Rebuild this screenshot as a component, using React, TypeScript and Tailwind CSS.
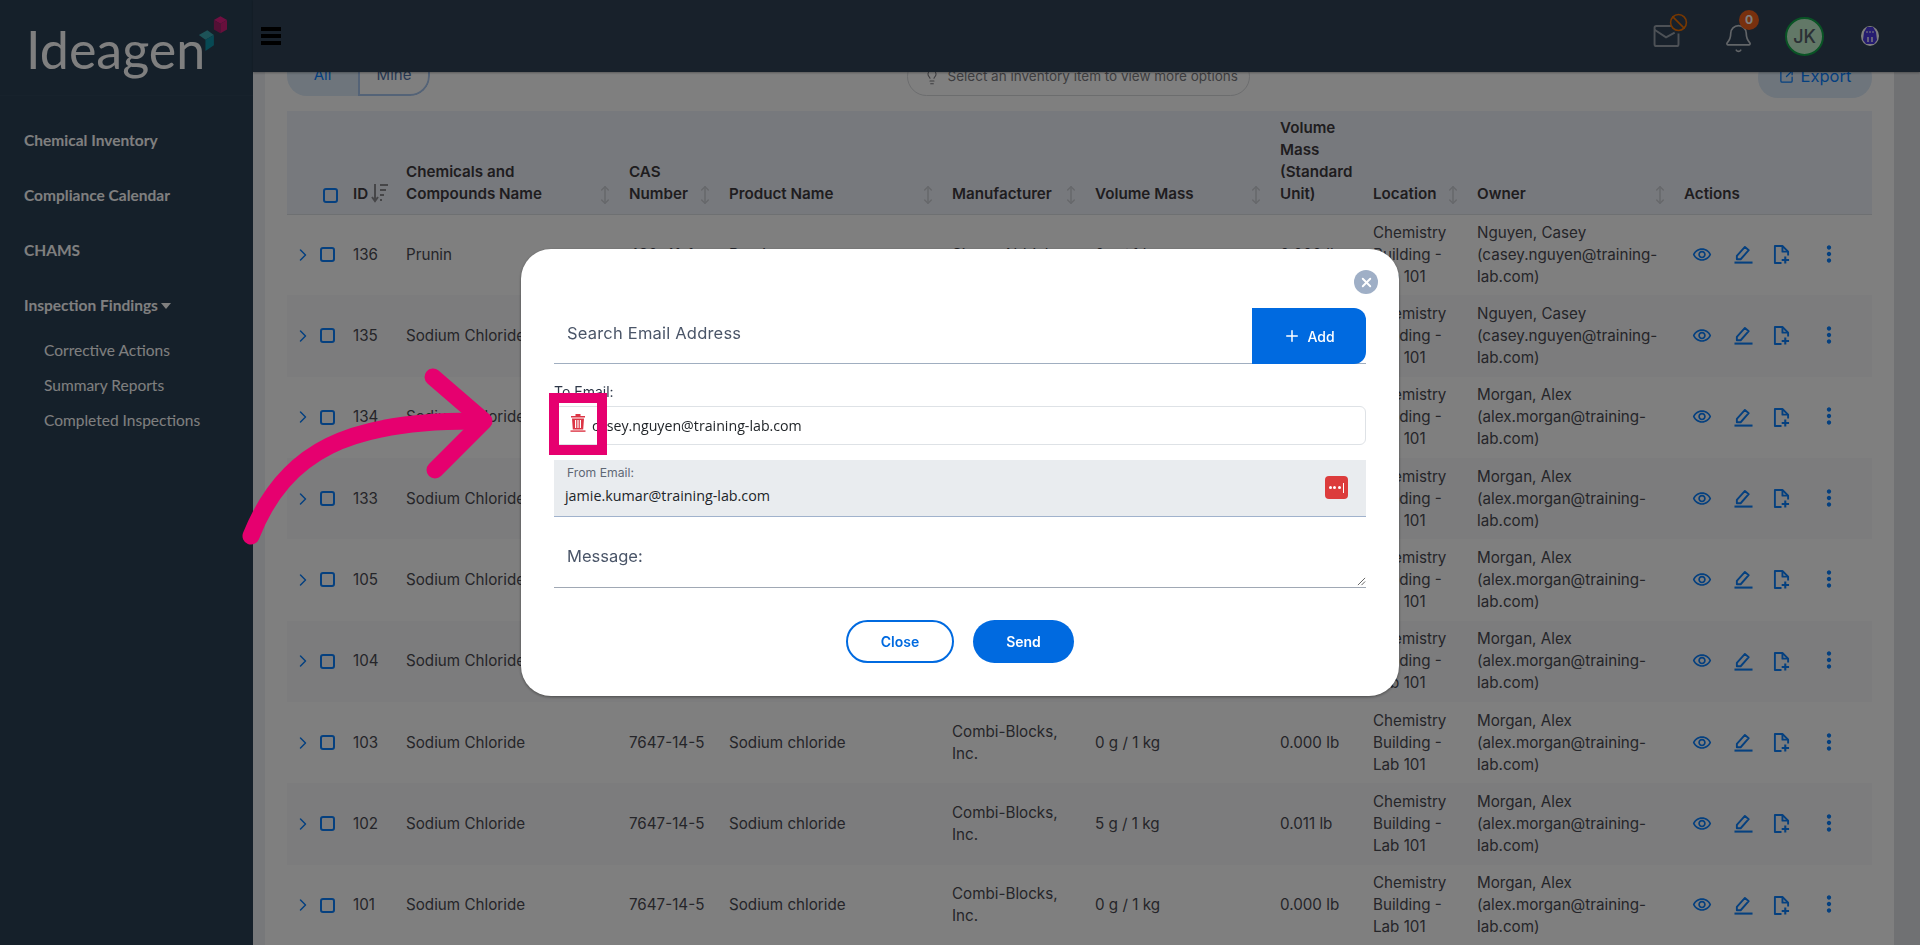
import React from 'react';
import { Ban, Bell, ChevronRight, Lightbulb, MoveVertical, Plus, SquareArrowOutUpRight, X } from 'lucide-react';
import { MdMoreVert, MdOutlineVisibility } from 'react-icons/md';

const casey = 'Nguyen, Casey (casey.nguyen@training-lab.com)';
const alex = 'Morgan, Alex (alex.morgan@training-lab.com)';

const rows = [
  { id: 136, name: 'Prunin', cas: '480-41-1', product: 'Prunin', maker: 'Sigma-Aldrich', vol: '0 g / 1 kg', std: '0.000 lb', owner: casey },
  { id: 135, name: 'Sodium Chloride', cas: '7647-14-5', product: 'Sodium chloride', maker: 'Combi-Blocks, Inc.', vol: '0 g / 1 kg', std: '0.000 lb', owner: casey },
  { id: 134, name: 'Sodium Chloride', cas: '7647-14-5', product: 'Sodium chloride', maker: 'Combi-Blocks, Inc.', vol: '0 g / 1 kg', std: '0.000 lb', owner: alex },
  { id: 133, name: 'Sodium Chloride', cas: '7647-14-5', product: 'Sodium chloride', maker: 'Combi-Blocks, Inc.', vol: '0 g / 1 kg', std: '0.000 lb', owner: alex },
  { id: 105, name: 'Sodium Chloride', cas: '7647-14-5', product: 'Sodium chloride', maker: 'Combi-Blocks, Inc.', vol: '0 g / 1 kg', std: '0.000 lb', owner: alex },
  { id: 104, name: 'Sodium Chloride', cas: '7647-14-5', product: 'Sodium chloride', maker: 'Combi-Blocks, Inc.', vol: '0 g / 1 kg', std: '0.000 lb', owner: alex },
  { id: 103, name: 'Sodium Chloride', cas: '7647-14-5', product: 'Sodium chloride', maker: 'Combi-Blocks, Inc.', vol: '0 g / 1 kg', std: '0.000 lb', owner: alex },
  { id: 102, name: 'Sodium Chloride', cas: '7647-14-5', product: 'Sodium chloride', maker: 'Combi-Blocks, Inc.', vol: '5 g / 1 kg', std: '0.011 lb', owner: alex },
  { id: 101, name: 'Sodium Chloride', cas: '7647-14-5', product: 'Sodium chloride', maker: 'Combi-Blocks, Inc.', vol: '0 g / 1 kg', std: '0.000 lb', owner: alex },
];

function Logo() {
  return (
    <div className="relative h-[96px] w-full border-b border-[#2f4558]">
      <div className="absolute left-[26px] top-[13px] font-['Lato',sans-serif] text-[52px] leading-[72px] text-white">
        Ideagen
      </div>
      <svg viewBox="0 0 32 44" className="absolute left-[197px] top-[14px] h-[42px] w-[30px]">
        <path d="M18 6 L25 2 L32 6 L25 10 Z" fill="#e01f82" />
        <path d="M18 6 L25 10 L25 20 L18 16 Z" fill="#a8206b" />
        <path d="M32 6 L25 10 L25 20 L32 16 Z" fill="#d01f78" />
        <path d="M2 22 L11 17 L18 22 L9 27 Z" fill="#3aa6b0" />
        <path d="M9 27 L18 22 L18 33 L9 39 Z" fill="#0f93a8" />
      </svg>
    </div>
  );
}

function Sidebar() {
  const main = ['Chemical Inventory', 'Compliance Calendar', 'CHAMS'];
  const sub = ['Corrective Actions', 'Summary Reports', 'Completed Inspections'];
  return (
    <aside className="w-[253px] shrink-0 bg-[#2a4054] font-['Lato',sans-serif] text-white">
      <Logo />
      <nav className="pl-[24px] pt-[17px]">
        {main.map((m) => (
          <div key={m} className="flex h-[55px] items-center text-[15.5px] font-bold">{m}</div>
        ))}
        <div className="flex h-[55px] items-center text-[15.5px] font-bold">
          Inspection Findings
          <span className="ml-[3px] h-0 w-0 border-x-[5px] border-t-[6px] border-x-transparent border-t-white" />
        </div>
        <div className="pl-[20px]">
          {sub.map((s) => (
            <div key={s} className="flex h-[35px] items-center text-[15.5px]">{s}</div>
          ))}
        </div>
      </nav>
    </aside>
  );
}

function TopBar() {
  return (
    <header className="relative z-10 flex h-[72px] shrink-0 items-center bg-[#304256] pl-[8px] pr-[40px] shadow-[0_1px_2px_rgba(0,0,0,0.3)]">
      <div className="flex w-[20px] flex-col gap-[3px]">
        <span className="h-[4px] bg-black" />
        <span className="h-[4px] bg-black" />
        <span className="h-[4px] bg-black" />
      </div>
      <div className="ml-auto flex items-center">
        <div className="relative mr-[36px] h-[40px] w-[36px]">
          <svg viewBox="0 0 28 24" className="absolute left-[2px] top-[8px] h-[23px] w-[28px] text-[#9aa3ad]" fill="none" stroke="currentColor" strokeWidth="2">
            <path d="M18 2 H3 a2 2 0 0 0 -2 2 V21 a2 2 0 0 0 2 2 H24 a2 2 0 0 0 2 -2 V10" />
            <path d="M1 6 L13 14 L22 9" />
          </svg>
          <Ban className="absolute left-[18px] top-[-3px] text-[#f07000]" size={19} strokeWidth={2} />
        </div>
        <div className="relative mr-[31px] h-[40px] w-[31px]">
          <Bell className="absolute left-0 top-[7px] text-[#c4cad0]" size={31} strokeWidth={1.3} />
          <span className="absolute left-[16px] top-[-6px] flex h-[20px] w-[20px] items-center justify-center rounded-full bg-[#f0601c] font-['Inter',sans-serif] text-[12px] font-bold text-white">0</span>
        </div>
        <div className="mr-[38px] flex h-[39px] w-[39px] items-center justify-center rounded-full border-[2px] border-[#12a84a] bg-[#c4f0cf] font-['Inter',sans-serif] text-[18px] font-medium text-[#56606a]">JK</div>
        <svg viewBox="0 0 18 20" className="-ml-[1px] mr-[1px] h-[20px] w-[18px]">
          <ellipse cx="9" cy="10" rx="9" ry="10" fill="#fff" />
          <path d="M6 1 H12 L15 6 L16 14 L13 18 H5 L2 14 L3 6 Z" fill="#4a38e0" />
          <path d="M5 6 H13" stroke="#fff" strokeWidth="1" strokeDasharray="2 1" />
          <path d="M7 11 V16 M11 11 V16" stroke="#fff" strokeWidth="1.4" />
        </svg>
      </div>
    </header>
  );
}

function Sort() {
  return <MoveVertical size={20} strokeWidth={1.8} className="shrink-0 text-[#cdd0d6]" />;
}

function Check() {
  return <span className="block h-[15px] w-[15px] rounded-[3px] border-2 border-[#0a80ff]" />;
}

function HeadCell({ children, sort = true }: { children: React.ReactNode; sort?: boolean }) {
  return (
    <th className="pb-[9px] pl-[8px] pr-[6px] text-left align-bottom font-semibold">
      <div className="flex items-end justify-between">
        <span>{children}</span>
        {sort && <Sort />}
      </div>
    </th>
  );
}

function PenIcon() {
  return (
    <svg viewBox="0 0 20 20" className="ml-[22px] h-[19px] w-[19px] shrink-0" fill="none" stroke="currentColor" strokeWidth="2">
      <path d="M3 15 V11.5 L11.5 2 L15.5 5.5 L7 15 Z" strokeLinejoin="round" />
      <path d="M0.5 18.5 H19.5" strokeWidth="2.2" />
    </svg>
  );
}

function NoteAddIcon() {
  return (
    <svg viewBox="0 0 18 20" className="ml-[20px] h-[19px] w-[17px] shrink-0" fill="none" stroke="currentColor" strokeWidth="2">
      <path d="M9 19 H2 V1 H10 L16 7 V11" strokeLinejoin="round" />
      <path d="M10 1 V7 H16" strokeLinejoin="round" />
      <path d="M13 12 V19.5 M9.2 15.8 H17" strokeWidth="2.2" />
    </svg>
  );
}

function InventoryTable() {
  return (
    <table className="w-[1585px] table-fixed border-collapse font-['Inter',sans-serif] text-[15.2px] leading-[22px] text-[#4b4b53]">
      <colgroup>
        <col className="w-[27px]" />
        <col className="w-[31px]" />
        <col className="w-[53px]" />
        <col className="w-[223px]" />
        <col className="w-[100px]" />
        <col className="w-[223px]" />
        <col className="w-[143px]" />
        <col className="w-[185px]" />
        <col className="w-[93px]" />
        <col className="w-[104px]" />
        <col className="w-[207px]" />
        <col className="w-[196px]" />
      </colgroup>
      <thead>
        <tr className="h-[103px] border-b border-[#dde0e5] bg-[#eff3fb] text-[#3f3b3f]">
          <th />
          <th className="pb-[11px] pl-[9px] text-left align-bottom"><Check /></th>
          <th className="pb-[9px] pl-[8px] text-left align-bottom font-semibold">
            <div className="flex items-end">
              ID
              <svg viewBox="0 0 18 20" className="mb-[2px] ml-[1px] h-[20px] w-[20px] shrink-0 text-[#8c8c90]" fill="none" stroke="currentColor" strokeWidth="2">
                <path d="M5 1 V17 M2 14 L5 18 L8 14" />
                <path d="M10 2 H18 M10 7 H16 M10 12 H14 M10 17 H12" />
              </svg>
            </div>
          </th>
          <HeadCell>Chemicals and Compounds Name</HeadCell>
          <HeadCell>CAS Number</HeadCell>
          <HeadCell>Product Name</HeadCell>
          <HeadCell>Manufacturer</HeadCell>
          <HeadCell>Volume Mass</HeadCell>
          <HeadCell sort={false}>Volume Mass (Standard Unit)</HeadCell>
          <HeadCell>Location</HeadCell>
          <HeadCell>Owner</HeadCell>
          <HeadCell sort={false}>Actions</HeadCell>
        </tr>
      </thead>
      <tbody>
        {rows.map((r, i) => (
          <tr key={r.id} className={`h-[81.33px] ${i % 2 === 1 ? 'bg-[#f9f9fa]' : 'bg-white'}`}>
            <td className="pl-[6px]"><ChevronRight size={20} strokeWidth={1.8} className="text-[#0a80ff]" /></td>
            <td className="pl-[6px]"><Check /></td>
            <td className="pl-[8px]">{r.id}</td>
            <td className="pl-[8px]">{r.name}</td>
            <td className="pl-[8px]">{r.cas}</td>
            <td className="pl-[8px]">{r.product}</td>
            <td className="pl-[8px] pr-[20px]">{r.maker}</td>
            <td className="pl-[8px]">{r.vol}</td>
            <td className="pl-[8px]">{r.std}</td>
            <td className="pl-[8px] pr-[2px]">Chemistry Building - Lab 101</td>
            <td className="pl-[8px] pr-[4px]">{r.owner}</td>
            <td className="pl-[8px]">
              <div className="flex items-center text-[#0a80ff]">
                <MdOutlineVisibility size={20} className="ml-[8px]" />
                <PenIcon />
                <NoteAddIcon />
                <MdMoreVert size={26} className="ml-[26px] -translate-y-[1px]" />
              </div>
            </td>
          </tr>
        ))}
      </tbody>
    </table>
  );
}

function Toolbar() {
  return (
    <div className="mb-[13px] flex h-[41px] items-start justify-between font-['Inter',sans-serif] text-[#0a80ff]">
      <div className="flex h-[39px] w-[143px] overflow-hidden rounded-b-[20px] text-[15px]">
        <div className="flex w-[71px] items-center justify-center bg-[#dceaf8] pb-[2px]">All</div>
        <div className="flex flex-1 items-center justify-center rounded-br-[20px] border-2 border-[#a9c6ee] pb-[2px] text-[#4d6fa5]">Mine</div>
      </div>
      <div className="mr-[32px] flex h-[39px] w-[343px] items-center gap-[8px] rounded-[20px] border border-[#d8dadd] pl-[16px] text-[13.5px] text-[#7a7a80]">
        <Lightbulb size={16} strokeWidth={1.6} />
        Select an inventory item to view more options
      </div>
      <div className="flex h-[41px] w-[114px] items-center justify-center gap-[7px] rounded-[20px] bg-[#dceaf8] pb-[2px] text-[16.5px]">
        <SquareArrowOutUpRight size={15} strokeWidth={2} />
        Export
      </div>
    </div>
  );
}

function TrashIcon() {
  return (
    <svg viewBox="0 0 16 18" className="-mt-[6px] ml-[1px] h-[18px] w-[16px] shrink-0 text-[#dc3545]" fill="currentColor">
      <path d="M5.5 0 H10.5 V2 H15 V3.5 H1 V2 H5.5 Z" />
      <path fillRule="evenodd" d="M2 4.5 H14 L13.2 15.5 H2.8 Z M5 6 V14 H6.2 V6 Z M7.4 6 V14 H8.6 V6 Z M9.8 6 V14 H11 V6 Z" />
      <rect x="0.5" y="16.4" width="15" height="1.4" />
    </svg>
  );
}

function EmailModal() {
  return (
    <div className="fixed inset-0 z-20 flex items-center justify-center bg-black/50">
      <div className="relative h-[447px] w-[878px] rounded-[30px] bg-white px-[33px] pt-[59px] font-['Inter',sans-serif] shadow-[0_1px_3px_rgba(0,0,0,0.4)]">
        <button className="absolute right-[21px] top-[21px] flex h-[24px] w-[24px] items-center justify-center rounded-full bg-[#9fafc6] text-white">
          <X size={15} strokeWidth={3} />
        </button>

        <div className="flex h-[56px] border-b border-[#a0aec0]">
          <div className="flex flex-1 items-center pb-[4px] pl-[13px] text-[16.5px] tracking-[0.2px] text-[#4a5568]">Search Email Address</div>
          <button className="flex h-[56px] w-[114px] items-center justify-center gap-[6px] rounded-r-[12px] bg-[#006ae0] text-[14px] font-medium text-white">
            <Plus size={18} strokeWidth={2} />
            Add
          </button>
        </div>

        <div className="mt-[18px] h-[24px] text-[14px] leading-[20px] text-[#2d3748]">To Email:</div>
        <div className="flex h-[39px] items-center rounded-[6px] border border-[#dee2e6] pl-[14px] font-['Open_Sans',sans-serif] text-[14.2px] text-[#212529]">
          <TrashIcon />
          <span className="ml-[6px]">casey.nguyen@training-lab.com</span>
        </div>

        <div className="relative mt-[15px] h-[57px] border-b border-[#a0b2cc] bg-[#e9ecef] pl-[13px] pt-[5px]">
          <div className="text-[12.2px] leading-[16px] text-[#5f6875]">From Email:</div>
          <div className="-ml-[2px] mt-[5px] font-['Open_Sans',sans-serif] text-[14.3px] leading-[20px] text-[#212529]">jamie.kumar@training-lab.com</div>
          <div className="absolute right-[18px] top-[16px] flex h-[23px] w-[23px] items-center justify-center gap-[1.5px] rounded-[4px] bg-[#dc3c3c]">
            <span className="h-[3px] w-[3px] rounded-full bg-white" />
            <span className="h-[3px] w-[3px] rounded-full bg-white" />
            <span className="h-[3px] w-[3px] rounded-full bg-white" />
            <span className="ml-[1px] h-[10px] w-[1px] bg-white" />
          </div>
        </div>

        <div className="relative mt-[20px] h-[51px] border-b border-[#a0a8b4] pl-[13px] text-[16.5px] leading-[39px] text-[#4a5568]">
          Message:
          <svg viewBox="0 0 10 10" className="absolute bottom-[1px] right-0 h-[9px] w-[9px] text-[#555]" fill="none" stroke="currentColor" strokeWidth="1">
            <path d="M9 1 L1 9 M9 5 L5 9" />
          </svg>
        </div>

        <div className="mt-[32px] flex justify-center gap-[19px] text-[14px] font-semibold">
          <button className="h-[43px] w-[108px] rounded-full border-2 border-[#006ae0] text-[#006ae0]">Close</button>
          <button className="h-[43px] w-[101px] rounded-full bg-[#006ae0] text-white">Send</button>
        </div>
      </div>
    </div>
  );
}

function Annotation() {
  return (
    <div className="fixed inset-0 z-30">
      <div className="absolute left-[549px] top-[393px] h-[62px] w-[58px] border-[10px] border-[#e6006f]" />
      <svg viewBox="0 0 1920 945" className="absolute inset-0 h-full w-full" fill="none" stroke="#e6006f" strokeWidth="17" strokeLinecap="round" strokeLinejoin="round">
        <path d="M251 536 C 285 450, 350 420, 478 421" />
        <path d="M433 377 L 484 421 L 435 470" />
      </svg>
    </div>
  );
}

export default function App() {
  return (
    <div className="flex h-[945px] w-[1920px] overflow-hidden bg-white">
      <Sidebar />
      <main className="flex min-w-0 flex-1 flex-col">
        <TopBar />
        <div className="flex flex-1 overflow-hidden">
          <div className="w-[12px] shrink-0 bg-[#eef0f4]" />
          <div className="flex-1 bg-white px-[22px]">
            <div className="-mt-[15px]">
              <Toolbar />
              <InventoryTable />
            </div>
          </div>
          <div className="w-[26px] shrink-0 bg-[#e0e2e6]" />
        </div>
      </main>
      <EmailModal />
      <Annotation />
    </div>
  );
}
